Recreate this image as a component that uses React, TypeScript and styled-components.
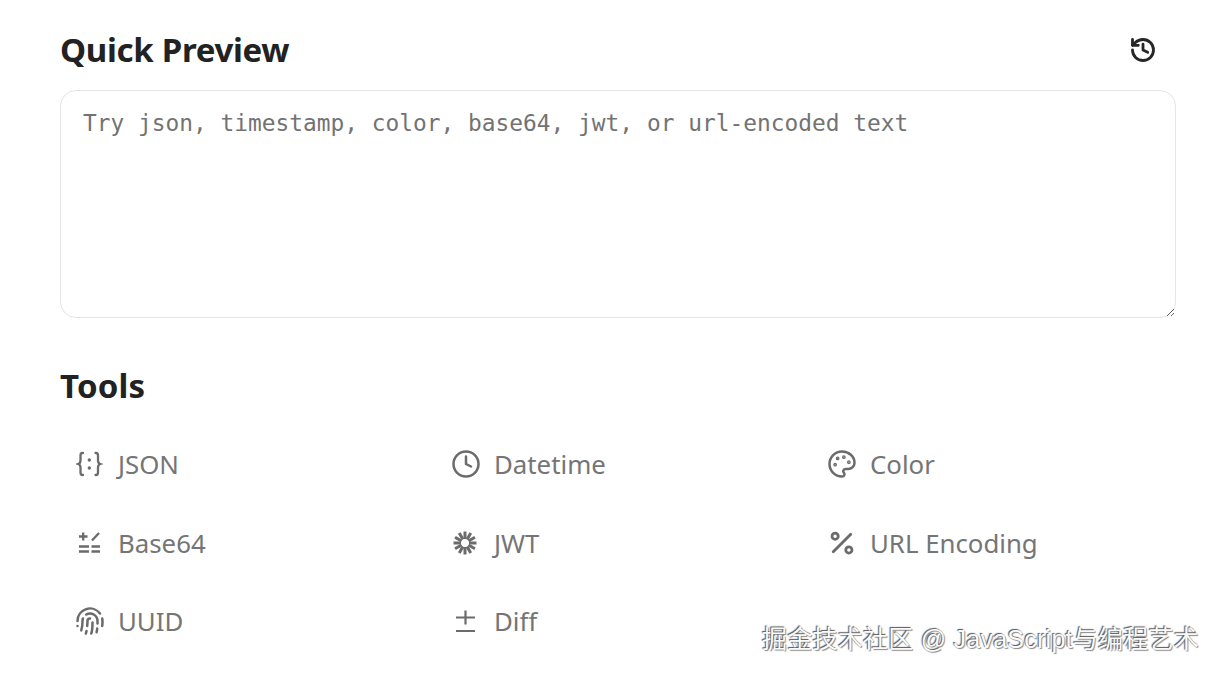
import React from "react";
import styled, { createGlobalStyle } from "styled-components";
import { Clock, Fingerprint, History, Palette, Percent } from "lucide-react";

const GlobalStyle = createGlobalStyle`
    html, body {
        margin: 0;
        padding: 0;
        background: #fff;
    }
    body {
        font-family: "Noto Sans", "Noto Sans CJK SC", sans-serif;
    }
`;

const BracesIcon = () => (
    <svg width="28" height="28" viewBox="0 0 28 28" fill="none" stroke="currentColor" strokeWidth="2.300" strokeLinecap="round">
        <path d="M7 3H6.500C5 3 4.500 4 4.500 5.500v5C4.500 12.500 3.700 13.500 2.300 14 3.700 14.500 4.500 15.500 4.500 17.500v5C4.500 24 5 25 6.500 25H7" />
        <path d="M19.500 3h.5c1.500 0 2 1 2 2.500v5c0 2 .8 3 2.200 3.500-1.400.5-2.200 1.500-2.200 3.500v5c0 1.500-.5 2.500-2 2.500h-.5" />
        <circle cx="13.300" cy="10" r="1.700" fill="currentColor" stroke="none" />
        <circle cx="13.300" cy="18" r="1.700" fill="currentColor" stroke="none" />
    </svg>
);

const CalcIcon = () => (
    <svg width="28" height="28" viewBox="0 0 28 28" fill="none" stroke="currentColor" strokeWidth="2.300">
        <path d="M3 7.500h8.500M7.200 3.500v8M16 11.500l7-7.500M3 17.500h10M3 22.500h10M15.500 17.500H24M15.500 22.500H24" />
    </svg>
);

const spokeAngles = [0, 30, 60, 90, 120, 150, 180, 210, 240, 270, 300, 330];

const SpokesIcon = () => (
    <svg width="28" height="28" viewBox="0 0 28 28" fill="none" stroke="currentColor" strokeWidth="3">
        {spokeAngles.map((angle) => (
            <path key={angle} d="M13 2.500v7.500" transform={`rotate(${angle} 13 14)`} />
        ))}
    </svg>
);

const PlusMinusIcon = () => (
    <svg width="28" height="28" viewBox="0 0 28 28" fill="none" stroke="currentColor" strokeWidth="2.200">
        <path d="M13.500 3.500v14M4 10.500h19M4 24h19" />
    </svg>
);

const tools = [
    { name: "JSON", icon: <BracesIcon /> },
    { name: "Datetime", icon: <Clock size={30} strokeWidth={2} /> },
    { name: "Color", icon: <Palette size={30} strokeWidth={2} /> },
    { name: "Base64", icon: <CalcIcon /> },
    { name: "JWT", icon: <SpokesIcon /> },
    { name: "URL Encoding", icon: <Percent size={30} strokeWidth={2.2} /> },
    { name: "UUID", icon: <Fingerprint size={30} strokeWidth={2} /> },
    { name: "Diff", icon: <PlusMinusIcon /> },
];

export default function App() {
    return (
        <>
            <GlobalStyle />
            <Page>
                <Header>
                    <Title>Quick Preview</Title>
                    <HistoryButton aria-label="history">
                        <History size={28} strokeWidth={2.4} />
                    </HistoryButton>
                </Header>
                <Input placeholder="Try json, timestamp, color, base64, jwt, or url-encoded text" />
                <SectionTitle>Tools</SectionTitle>
                <ToolGrid>
                    {tools.map((tool) => (
                        <ToolItem key={tool.name}>
                            <ToolIcon>{tool.icon}</ToolIcon>
                            {tool.name}
                        </ToolItem>
                    ))}
                </ToolGrid>
                <Watermark>掘金技术社区 @ JavaScript与编程艺术</Watermark>
            </Page>
        </>
    );
}

const Page = styled.div`
    position: relative;
    box-sizing: border-box;
    width: 1219px;
    height: 674px;
    padding: 28px 43px 0 60px;
    overflow: hidden;
    color: #1f1f1f;
`;

const Header = styled.div`
    display: flex;
    align-items: center;
    justify-content: space-between;
    height: 44px;
    padding-right: 19px;
    margin-bottom: 18px;
`;

const Title = styled.h2`
    margin: 0;
    font-size: 33px;
    line-height: 44px;
    font-weight: 700;
    letter-spacing: -0.3px;
    color: #222;
`;

const SectionTitle = styled(Title)`
    margin-top: 46px;
    letter-spacing: 0.2px;
`;

const HistoryButton = styled.div`
    display: flex;
    color: #262626;
`;

const Input = styled.textarea`
    display: block;
    box-sizing: border-box;
    width: 100%;
    height: 228px;
    padding: 17px 22px;
    border: 1px solid #e5e5e5;
    border-radius: 16px;
    outline: none;
    background: #fff;
    font-family: "DejaVu Sans Mono", "Liberation Mono", monospace;
    font-size: 22.85px;
    line-height: 30px;

    &::placeholder {
        color: #737373;
        opacity: 1;
    }
`;

const ToolGrid = styled.div`
    display: grid;
    grid-template-columns: 376px 376px 1fr;
    grid-auto-rows: 78.500px;
    margin-top: 28px;
`;

const ToolItem = styled.div`
    display: flex;
    align-items: center;
    gap: 13px;
    height: 56px;
    padding-left: 15px;
    font-size: 25.800px;
    color: #757575;
`;

const ToolIcon = styled.span`
    display: flex;
    align-items: center;
    justify-content: center;
    width: 30px;
    height: 30px;
    color: #6b6b6b;
`;

const Watermark = styled.div`
    position: absolute;
    right: 20px;
    bottom: 19px;
    font-family: "Liberation Sans", "Noto Sans CJK SC", sans-serif;
    font-size: 25px;
    letter-spacing: 0.25px;
    line-height: 32px;
    white-space: nowrap;
    color: #fafafa;
    text-shadow: -1px -1px 1px #555, 1px 1px 1px #888;
`;
